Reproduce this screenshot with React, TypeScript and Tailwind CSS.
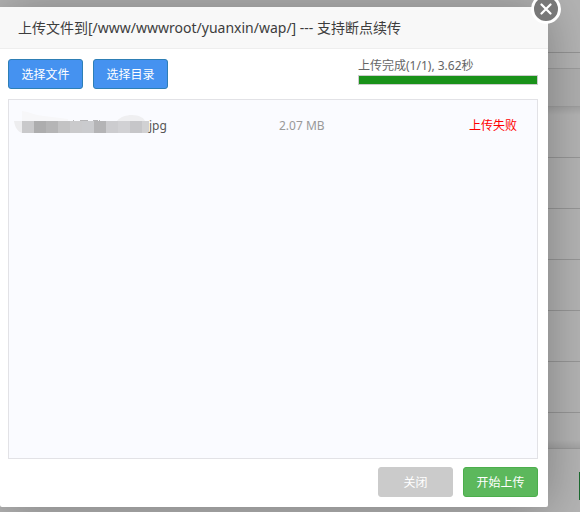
import React from "react";
import { clsx } from "clsx";

interface UploadFile {
  id: number;
  ext: string;
  size: string;
  status: string;
}

const files: UploadFile[] = [
  { id: 1, ext: "jpg", size: "2.07 MB", status: "上传失败" },
];

const listRows = [1, 2, 3, 4, 5, 6];

const mosaic = [
  "#c9c9cb",
  "#adadae",
  "#b5b5b6",
  "#c3c3c4",
  "#cacacc",
  "#cacbce",
  "#b4b4b6",
  "#cccccf",
  "#d1d1d4",
  "#c6c6c9",
  "#d1d1d3",
];

interface ButtonProps {
  variant: "blue" | "green" | "gray";
  children: React.ReactNode;
}

const Button = ({ variant, children }: ButtonProps) => {
  return (
    <button
      type="button"
      className={clsx(
        "h-[30px] w-[75px] rounded-[3px] border pt-0.5 text-xs text-white",
        variant === "blue" && "border-[#2e7fb5] bg-[#4592f0]",
        variant === "green" && "border-[#4cae4c] bg-[#5cb85c]",
        variant === "gray" && "border-[#cbcbcb] bg-[#cbcbcb]"
      )}
    >
      {children}
    </button>
  );
};

// file names are masked with coloured blocks
const MaskedName = () => {
  return (
    <svg width="135" height="30" viewBox="0 0 135 30" aria-hidden="true">
      <path d="M8 0c8 1 12 4 22 5l24 3v2H8z" fill="#f7f7f9" />
      <path d="M0 10h8v12C3 20 1 16 0 10z" fill="#ededef" />
      <path d="M103 10c3-4 9-6 15-6 7 0 12 3 13 6z" fill="#efeff1" />
      <path d="M59 9.5h1M66 9.5h8M79 9.5h5M85 9.5h1" stroke="#b4b4b6" />
      {mosaic.map((color, i) => (
        <rect key={i} x={8 + i * 12} y="10" width="12" height="12" fill={color} />
      ))}
    </svg>
  );
};

// dimmed page behind the dialog
const PageBackground = () => {
  return (
    <div className="flex flex-col bg-[#b4b4b4] [grid-area:1/1]">
      <div className="h-[53px] border-b border-[#949494]" />
      <div className="h-4 border-b border-[#9d9d9d]" />
      <div className="h-[38px] border-b border-[#9f9f9f] bg-[#afafaf]" />
      <div className="h-2 bg-linear-to-b from-[#a4a4a4] to-[#b4b4b4]" />
      <div className="-mt-2">
        {listRows.map((row) => (
          <div key={row} className="h-[51px] border-b border-[#979797]" />
        ))}
      </div>
      <div className="flex h-9 flex-col justify-end border-b border-[#9a9a9a]">
        <div className="h-2 bg-linear-to-b from-[#b4b4b4] to-[#a4a4a4]" />
      </div>
      <div className="flex grow justify-end pt-[23px]">
        <div className="h-7 w-px bg-[#1d6b31]" />
      </div>
    </div>
  );
};

const UploadDialog = () => {
  return (
    <section
      role="dialog"
      aria-labelledby="upload-title"
      className="relative mt-[7px] mr-8 mb-[5px] flex flex-col rounded-[2px] bg-white shadow-[1px_1px_50px_rgba(0,0,0,0.3)] [grid-area:1/1]"
    >
      <header className="flex h-[42px] items-center border-b border-[#eee] bg-[#f8f8f8] pl-[18px]">
        <h2 id="upload-title" className="text-sm text-[#3d3d3d]">
          上传文件到[/www/wwwroot/yuanxin/wap/] --- 支持断点续传
        </h2>
      </header>

      <button
        type="button"
        aria-label="关闭窗口"
        className="absolute -top-[13px] -right-[13px] flex size-[30px] items-center justify-center rounded-full border-3 border-white bg-[#787878]"
      >
        <svg width="12" height="12" viewBox="0 0 12 12" fill="none" stroke="#fff" strokeWidth="2.2" strokeLinecap="round">
          <path d="M1.5 1.5l9 9M10.5 1.5l-9 9" />
        </svg>
      </button>

      <div className="flex grow flex-col pr-[10px] pl-2">
        <div className="flex h-[50px] items-start justify-between">
          <div className="flex gap-[10px] pt-[10px]">
            <Button variant="blue">选择文件</Button>
            <Button variant="blue">选择目录</Button>
          </div>
          <div className="w-[180px] pt-[7px]">
            <p className="text-xs leading-[19px] text-[#666]">上传完成(1/1), 3.62秒</p>
            <div
              role="progressbar"
              aria-label="上传进度"
              aria-valuenow={100}
              className="h-[10px] border border-[#ccc]"
            >
              <div className="h-full bg-[#1a921a]" style={{ width: "100%" }} />
            </div>
          </div>
        </div>

        <ul className="grow border border-[#e2e2e6] bg-[#fafbff] pt-[11px] text-xs">
          {files.map((file) => (
            <li key={file.id} className="flex h-[30px] items-center pr-5 pl-[5px]">
              <div className="flex w-[265px] items-center text-[#555]">
                <MaskedName />
                <span>{file.ext}</span>
              </div>
              <span className="grow text-[#999]">{file.size}</span>
              <span className="text-[#f00]">{file.status}</span>
            </li>
          ))}
        </ul>

        <footer className="flex justify-end gap-[10px] pt-2 pb-[10px]">
          <Button variant="gray">关闭</Button>
          <Button variant="green">开始上传</Button>
        </footer>
      </div>
    </section>
  );
};

export default function App() {
  return (
    <main className="grid min-h-screen overflow-hidden font-['Noto_Sans','Noto_Sans_CJK_SC',sans-serif]">
      <PageBackground />
      <UploadDialog />
    </main>
  );
}
